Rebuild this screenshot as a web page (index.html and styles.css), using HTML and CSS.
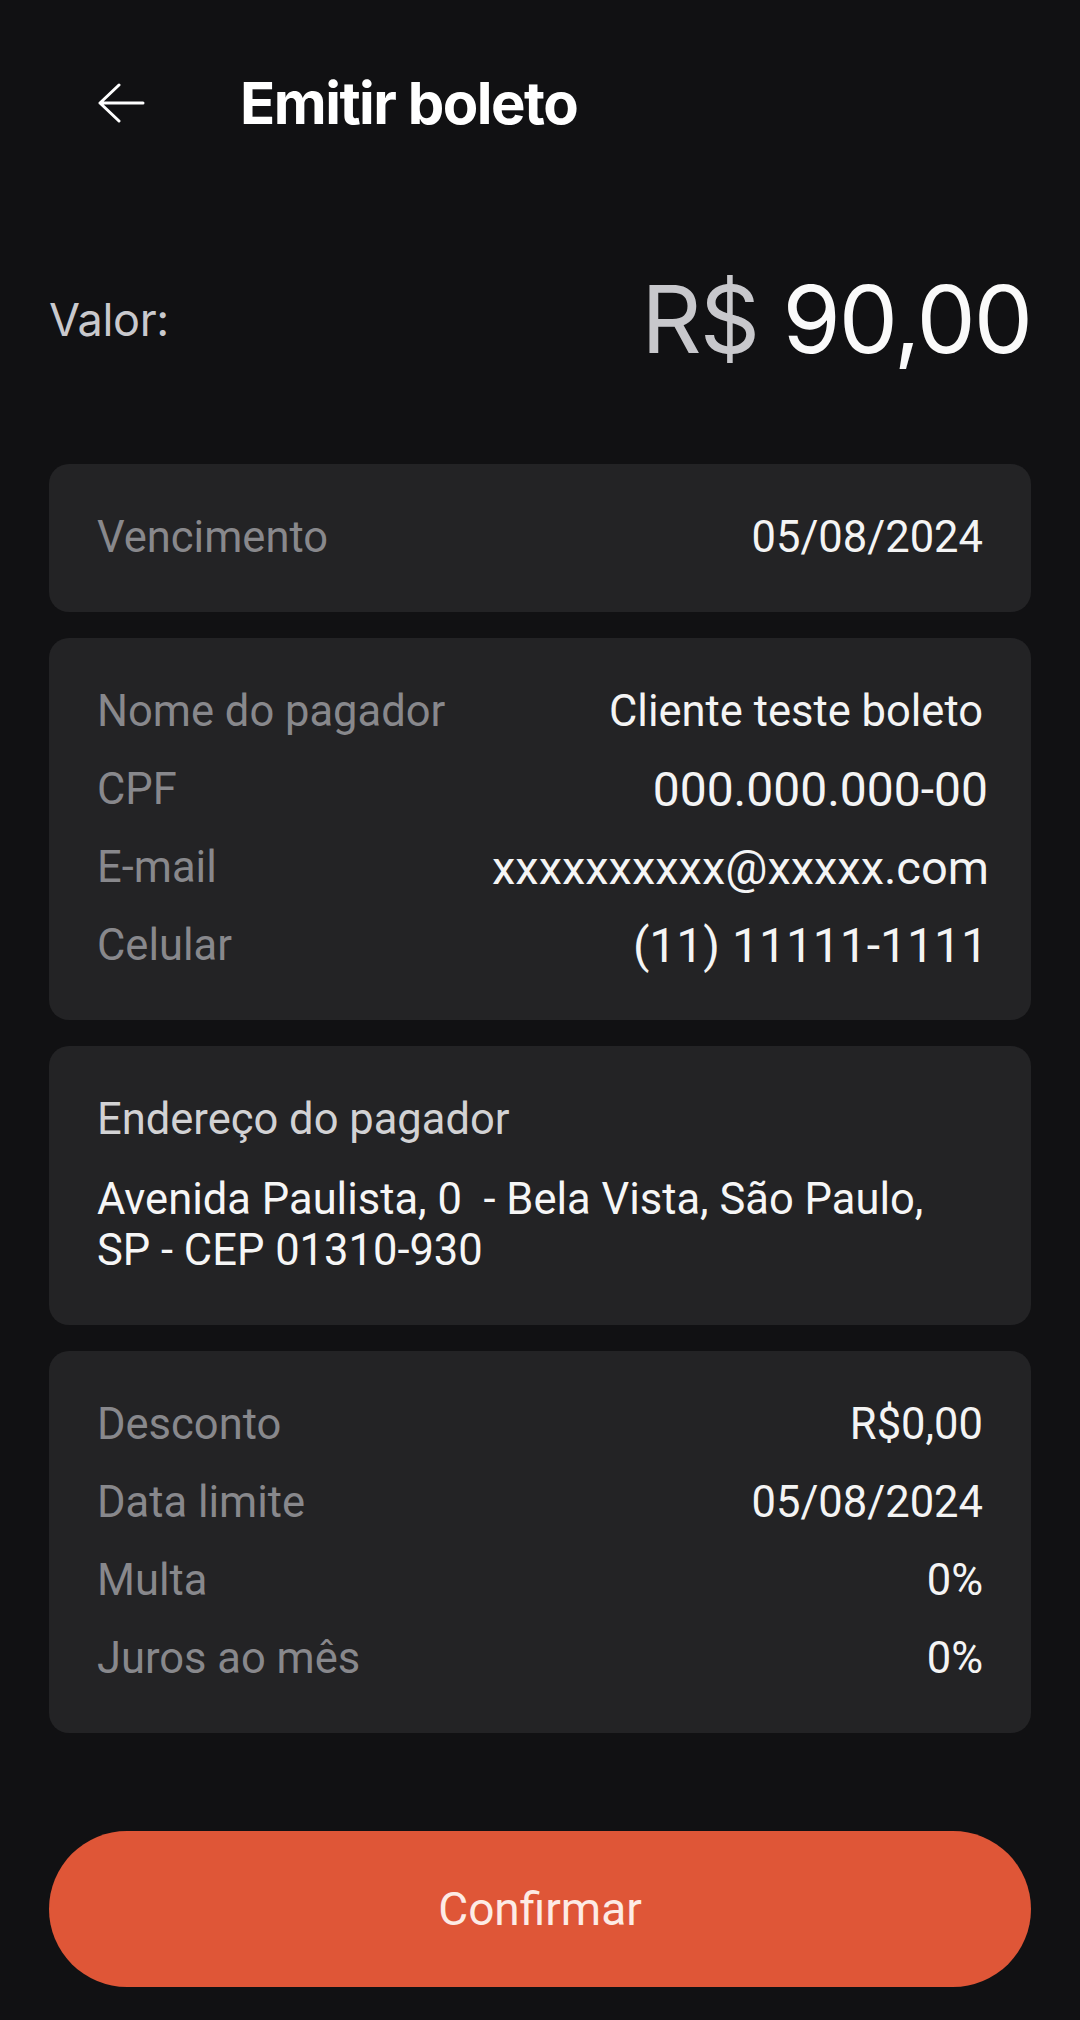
FILE: index.html
```html
<!DOCTYPE html>
<html lang="pt-BR">
<head>
<meta charset="utf-8">
<title>Emitir boleto</title>
<link rel="stylesheet" href="styles.css">
</head>
<body>
<div class="screen">
  <header class="topbar">
    <svg class="back" viewBox="0 0 48 40" aria-hidden="true">
      <path d="M3 20 H46 M22 2 L3 20 L22 38" fill="none" stroke="#ffffff" stroke-width="3" stroke-linecap="round" stroke-linejoin="round"/>
    </svg>
    <h1 class="title">Emitir boleto</h1>
  </header>

  <main class="content">
    <section class="amount-row">
      <span class="amount-label">Valor:</span>
      <span class="amount"><span class="currency">R$</span> 90,00</span>
    </section>

    <section class="card">
      <div class="row"><span class="label">Vencimento</span><span class="value">05/08/2024</span></div>
    </section>

    <section class="card">
      <div class="row"><span class="label">Nome do pagador</span><span class="value">Cliente teste boleto</span></div>
      <div class="row"><span class="label">CPF</span><span class="value big">000.000.000-00</span></div>
      <div class="row"><span class="label">E-mail</span><span class="value big email">xxxxxxxxxx@xxxxx.com</span></div>
      <div class="row"><span class="label">Celular</span><span class="value big">(11) 11111-1111</span></div>
    </section>

    <section class="card address">
      <div class="address-title">Endereço do pagador</div>
      <div class="address-text">Avenida Paulista, 0&nbsp; - Bela Vista, São Paulo,<br>SP - CEP 01310-930</div>
    </section>

    <section class="card">
      <div class="row"><span class="label">Desconto</span><span class="value">R$0,00</span></div>
      <div class="row"><span class="label">Data limite</span><span class="value">05/08/2024</span></div>
      <div class="row"><span class="label">Multa</span><span class="value">0%</span></div>
      <div class="row"><span class="label">Juros ao mês</span><span class="value">0%</span></div>
    </section>

    <button class="confirm" type="button">Confirmar</button>
  </main>
</div>
</body>
</html>
```

FILE: styles.css
```css
* { box-sizing: border-box; }

html, body {
  margin: 0;
  padding: 0;
  background: #111113;
}

body {
  font-family: Roboto, "Noto Sans", Arial, sans-serif;
  color: #f2f2f2;
  width: 1080px;
  height: 2020px;
  overflow: hidden;
}

.screen {
  display: flex;
  flex-direction: column;
}

.topbar {
  height: 206px;
  display: flex;
  align-items: center;
  padding-left: 97px;
}

.back {
  width: 48px;
  height: 40px;
  display: block;
}

.title {
  margin: 0 0 0 95px;
  font-family: Inter, "Noto Sans", sans-serif;
  font-weight: 700;
  font-size: 58px;
  letter-spacing: -1.5px;
  color: #ffffff;
  line-height: 1;
}

.content {
  display: flex;
  flex-direction: column;
  gap: 26px;
  padding: 0 49px;
}

.amount-row {
  height: 226px;
  margin-bottom: 6px;
  display: flex;
  align-items: center;
  justify-content: space-between;
}

.amount-label {
  font-family: Inter, "Noto Sans", sans-serif;
  font-size: 45px;
  color: #c9c9cd;
  letter-spacing: -0.3px;
}

.amount {
  font-family: Inter, "Noto Sans", sans-serif;
  font-size: 94px;
  letter-spacing: -2px;
  color: #fafafa;
  line-height: 1;
}

.currency {
  color: #c8c8cc;
}

.card {
  background: #232325;
  border-radius: 20px;
  padding: 49px 48px;
  display: flex;
  flex-direction: column;
  gap: 28px;
}

.row {
  display: flex;
  justify-content: space-between;
  align-items: center;
  height: 50px;
  font-size: 43.5px;
  line-height: 50px;
}

.label {
  color: #88888c;
}

.value {
  color: #f4f4f4;
}

.value.big {
  font-size: 48px;
  margin-right: -5px;
}

.value.email {
  font-size: 47px;
  margin-right: -6px;
}

.address {
  gap: 29px;
}

.address-title {
  font-size: 43.5px;
  line-height: 50px;
  color: #d2d2d4;
}

.address-text {
  font-size: 43.5px;
  line-height: 51px;
  color: #f6f6f6;
}

.confirm {
  margin-top: 72px;
  height: 156px;
  border: none;
  border-radius: 78px;
  background: #df5637;
  color: #fdebe5;
  font-family: Roboto, "Noto Sans", Arial, sans-serif;
  font-weight: 400;
  font-size: 46px;
  cursor: pointer;
}
```
